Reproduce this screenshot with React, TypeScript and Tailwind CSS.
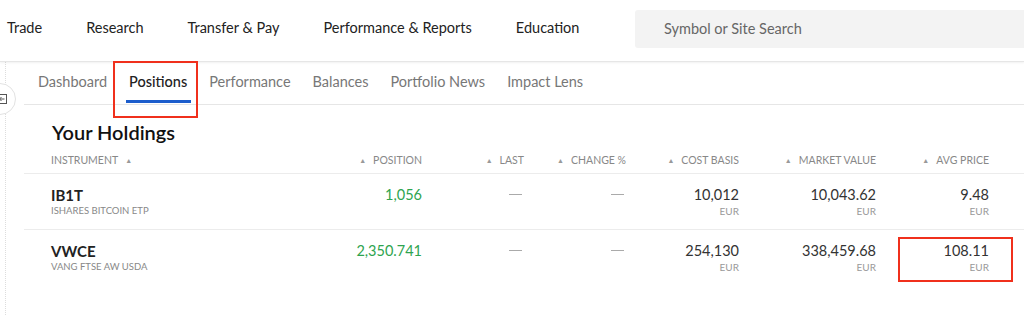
import React from "react";

const font = { fontFamily: "Lato, 'Open Sans', Arial, sans-serif" };

function Arrow() {
  return <span className="text-[7px] leading-none text-[#999]">▲</span>;
}

const cols = "grid grid-cols-[271px_100px_102px_102px_113px_137px_113px]";

type Row = {
  sym: string;
  name: string;
  pos: string;
  cost: string;
  mv: string;
  avg: string;
};

const rows: Row[] = [
  { sym: "IB1T", name: "ISHARES BITCOIN ETP", pos: "1,056", cost: "10,012", mv: "10,043.62", avg: "9.48" },
  { sym: "VWCE", name: "VANG FTSE AW USDA", pos: "2,350.741", cost: "254,130", mv: "338,459.68", avg: "108.11" },
];

function Money({ v }: { v: string }) {
  return (
    <div className="flex flex-col items-end">
      <span className="text-[14.5px] leading-[18px] text-[#333]">{v}</span>
      <span className="text-[10px] leading-[14px] text-[#999]">EUR</span>
    </div>
  );
}

export default function App() {
  return (
    <div className="w-[1024px] h-[315px] overflow-hidden bg-white relative" style={font}>
      {/* top nav */}
      <div className="h-[62px] flex items-center border-b border-[#e6e6e6] shadow-[0_1px_2px_rgba(0,0,0,0.06)] relative z-10 bg-white">
        <nav className="flex items-center gap-[44px] pl-[7px] text-[14.5px] text-[#222] pb-[6px]">
          <span>Trade</span>
          <span>Research</span>
          <span>Transfer &amp; Pay</span>
          <span>Performance &amp; Reports</span>
          <span>Education</span>
        </nav>
        <div className="absolute left-[635px] top-[10px] w-[400px] h-[38px] bg-[#f3f3f3] rounded-[3px] flex items-center pl-[29px] text-[14.5px] text-[#666]">
          Symbol or Site Search
        </div>
      </div>

      <div className="flex">
        {/* sidebar */}
        <div className="w-[6px] h-[253px] border-r border-dotted border-[#ddd] relative">
          <div className="absolute -left-[16px] top-[21px] w-[32px] h-[32px] rounded-full border border-[#e2e2e2] bg-white flex items-center justify-end pr-[8px]">
            <svg width="10" height="10" viewBox="0 0 10 10">
              <rect x="0.5" y="0.5" width="9" height="9" fill="none" stroke="#555" strokeWidth="1" />
              <path d="M7.5 5H2.5M4.5 3L2.5 5L4.5 7" fill="none" stroke="#555" strokeWidth="1" />
            </svg>
          </div>
        </div>

        {/* main */}
        <div className="flex-1 pl-[18px]">
          {/* tabs */}
          <div className="h-[43px] flex items-end border-b border-[#e6e6e6] pl-[14px] gap-[22px] text-[14.5px] text-[#777]">
            <div className="h-full flex items-center pb-[3px]">Dashboard</div>
            <div className="h-full flex flex-col justify-center relative text-[#222] font-medium pb-[3px]">
              <span>Positions</span>
              <span className="absolute -left-[3px] -right-[4px] bottom-[1px] h-[3px] bg-[#1c5dcc]" />
            </div>
            <div className="h-full flex items-center pb-[3px]">Performance</div>
            <div className="h-full flex items-center pb-[3px]">Balances</div>
            <div className="h-full flex items-center pb-[3px]">Portfolio News</div>
            <div className="h-full flex items-center pb-[3px]">Impact Lens</div>
          </div>

          {/* holdings */}
          <div className="pl-[28px] pt-[15px] text-[20px] leading-[24px] font-semibold text-[#111]">Your Holdings</div>

          <div className={`${cols} pl-[27px] h-[30px] items-center pt-[4px] border-b border-[#ececec] text-[10.5px] text-[#888]`}>
            <div className="flex items-center gap-[7px]">
              INSTRUMENT <Arrow />
            </div>
            <div className="flex items-center justify-end gap-[7px]"><Arrow />POSITION</div>
            <div className="flex items-center justify-end gap-[7px]"><Arrow />LAST</div>
            <div className="flex items-center justify-end gap-[7px]"><Arrow />CHANGE %</div>
            <div className="flex items-center justify-end gap-[7px]"><Arrow />COST BASIS</div>
            <div className="flex items-center justify-end gap-[7px]"><Arrow />MARKET VALUE</div>
            <div className="flex items-center justify-end gap-[7px]"><Arrow />AVG PRICE</div>
          </div>

          {rows.map((r, i) => (
            <div
              key={r.sym}
              className={`${cols} pl-[27px] h-[56px] pt-[12px] items-start ${i === 0 ? "border-b border-[#ececec]" : ""}`}
            >
              <div className="flex flex-col">
                <span className="text-[15px] leading-[18px] font-bold text-[#222]">{r.sym}</span>
                <span className="text-[9.5px] leading-[14px] text-[#888]">{r.name}</span>
              </div>
              <div className="text-right text-[14.5px] leading-[18px] text-[#2ea44f]">{r.pos}</div>
              <div className="flex justify-end pr-[2px] pt-[8px]"><span className="w-[13px] h-px bg-[#aaa]" /></div>
              <div className="flex justify-end pr-[2px] pt-[8px]"><span className="w-[13px] h-px bg-[#aaa]" /></div>
              <Money v={r.cost} />
              <Money v={r.mv} />
              <Money v={r.avg} />
            </div>
          ))}
        </div>
      </div>

      {/* annotation boxes */}
      <div className="absolute left-[113px] top-[61px] w-[85px] h-[57px] border-2 border-[#f0301c] pointer-events-none z-20" />
      <div className="absolute left-[898px] top-[237px] w-[115px] h-[45px] border-2 border-[#f0301c] pointer-events-none z-20" />
    </div>
  );
}
